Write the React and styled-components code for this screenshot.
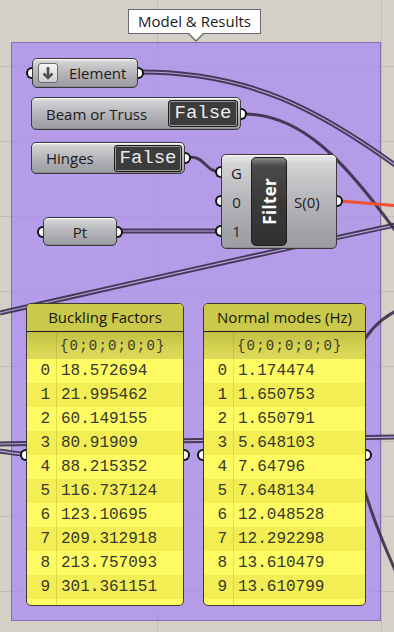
import React from "react";
import styled, { createGlobalStyle } from "styled-components";

const Global = createGlobalStyle`
  html, body { margin: 0; padding: 0; background: #d4d0c8; }
  body { font-family: "Open Sans", "Noto Sans", sans-serif; color: #111; }
`;

const Canvas = styled.div`
  position: relative;
  width: 394px;
  height: 632px;
  overflow: hidden;
  background-color: #d4d0c8;
  background-image:
    linear-gradient(to right, #c0bcb4 1px, transparent 1px),
    linear-gradient(to bottom, #c0bcb4 1px, transparent 1px);
  background-size: 224px 75px;
  background-position: 157px 66px;
`;

const Group = styled.div`
  position: absolute;
  left: 11px;
  top: 42px;
  width: 370px;
  height: 579px;
  box-sizing: border-box;
  background: rgba(168, 136, 245, 0.72);
  border: 1px solid rgba(110, 92, 160, 0.7);
`;

const Tip = styled.div`
  position: absolute;
  left: 128px;
  top: 9px;
  width: 133px;
  height: 25px;
  box-sizing: border-box;
  background: #fff;
  border: 1px solid #6a6a6a;
  font-size: 15px;
  line-height: 22px;
  text-align: center;
  color: #1a1a1a;

  &::before,
  &::after {
    content: "";
    position: absolute;
    left: 59px;
    border: 8px solid transparent;
    border-bottom: 0;
  }
  &::before {
    bottom: -9px;
    border-top-color: #6a6a6a;
  }
  &::after {
    bottom: -7px;
    border-top-color: #fff;
  }
`;

const Wires = styled.svg`
  position: absolute;
  left: 0;
  top: 0;
  pointer-events: none;
`;

const Node = styled.div`
  position: absolute;
  left: ${(p) => p.$x}px;
  top: ${(p) => p.$y}px;
  width: ${(p) => p.$w}px;
  height: ${(p) => p.$h}px;
  box-sizing: border-box;
  border: 1px solid #3a3a3c;
  border-radius: 5px;
  background: linear-gradient(
    to bottom,
    #ececec 0%,
    #d2d2d4 10%,
    #bcbcc0 40%,
    #a6a6ac 75%,
    #9c9ca4 100%
  );
  box-shadow: inset 0 1px 0 #fafafa, inset 0 -1px 0 #8a8a92;
  display: flex;
  align-items: center;
  font-size: 15px;
  color: #1c1c1c;
`;

const Grip = styled.span`
  position: absolute;
  top: ${(p) => p.$y - 6}px;
  ${(p) => (p.$out ? "right: -7px;" : "left: -7px;")}
  width: 6px;
  height: 12px;
  box-sizing: border-box;
  background: #fff;
  border: 2px solid #111;
  ${(p) =>
    p.$out
      ? "border-left: 0; border-radius: 0 6px 6px 0;"
      : "border-right: 0; border-radius: 6px 0 0 6px;"}
  z-index: 2;
`;

const ListButton = styled.span`
  width: 20px;
  height: 20px;
  margin-left: 5px;
  box-sizing: border-box;
  border: 1px solid #6a6a6a;
  border-radius: 3px;
  background: linear-gradient(to bottom, #f6f6f6, #cfcfcf);
  display: flex;
  align-items: center;
  justify-content: center;
`;

const Label = styled.span`
  margin-left: ${(p) => p.$ml || 0}px;
  white-space: nowrap;
`;

const Toggle = styled(Node)`
  justify-content: space-between;
  padding: 0 2px 0 14px;
`;

const FalseBox = styled.span`
  width: ${(p) => p.$w}px;
  height: 27px;
  box-sizing: border-box;
  background: #3c3c3c;
  border: 1px solid #1c1c1c;
  border-radius: 3px;
  box-shadow: inset 0 0 0 1px #9a9a9a;
  font-family: "Liberation Mono", "DejaVu Sans Mono", monospace;
  font-size: 19px;
  line-height: 25px;
  text-align: center;
  color: #ececec;
`;

const CenterNode = styled(Node)`
  justify-content: center;
`;

const FilterNode = styled(Node)`
  align-items: stretch;
`;

const Ports = styled.div`
  width: ${(p) => p.$w}px;
  display: flex;
  flex-direction: column;
  justify-content: ${(p) => (p.$center ? "center" : "space-around")};
  align-items: ${(p) => (p.$center ? "flex-start" : "center")};
  padding: ${(p) => (p.$center ? "0 0 0 7px" : "3px 0")};
  box-sizing: border-box;
  font-size: 15px;
`;

const Core = styled.div`
  width: 36px;
  margin: 2px 0;
  box-sizing: border-box;
  border: 1px solid #1e1e1e;
  border-radius: 5px;
  background: linear-gradient(to bottom, #8a8a8a 0%, #4a4a4a 9%, #3a3a3a 50%, #303030 100%);
  display: flex;
  align-items: center;
  justify-content: center;
`;

const CoreText = styled.span`
  writing-mode: vertical-rl;
  transform: rotate(180deg);
  color: #fff;
  font-weight: 700;
  font-size: 17px;
  letter-spacing: 0.3px;
`;

const Panel = styled.div`
  position: absolute;
  left: ${(p) => p.$x}px;
  top: 303px;
  width: ${(p) => p.$w}px;
  height: 303px;
  box-sizing: border-box;
  border: 1px solid #3a3a30;
  border-radius: 5px;
  background: #fefc62;
  display: flex;
  flex-direction: column;
`;

const PanelBody = styled.div`
  flex: 1;
  border-radius: 4px;
  overflow: hidden;
  display: flex;
  flex-direction: column;
`;

const PanelHead = styled.div`
  height: 27px;
  flex-shrink: 0;
  background: #cbc94c;
  border-bottom: 1px solid #1e1e10;
  font-size: 15px;
  line-height: 27px;
  text-align: center;
  color: #141408;
`;

const Row = styled.div`
  display: grid;
  grid-template-columns: 30px 1fr;
  height: ${(p) => (p.$path ? 27 : 24)}px;
  flex-shrink: 0;
  background: ${(p) =>
    p.$path
      ? "linear-gradient(to bottom, #c2bf44, #d6d452 60%, #dcd958)"
      : p.$odd
      ? "#f3ee54"
      : "#fefc62"};
  font-family: "Liberation Mono", "Courier New", monospace;
  font-size: ${(p) => (p.$path ? 14 : 16)}px;
  letter-spacing: ${(p) => (p.$path ? 1.2 : 0)}px;
  color: #38382c;
  align-items: center;
`;

const Idx = styled.span`
  height: 100%;
  display: flex;
  align-items: center;
  justify-content: flex-end;
  padding-right: 6px;
  border-right: 1px solid rgba(150, 140, 20, 0.28);
`;

const Val = styled.span`
  padding-left: ${(p) => (p.$path ? 3 : 4)}px;
  white-space: nowrap;
`;

const Filler = styled.div`
  flex: 1;
  display: grid;
  grid-template-columns: 30px 1fr;
`;

const FillIdx = styled.span`
  border-right: 1px solid rgba(150, 140, 20, 0.28);
`;

const WIRE = "rgba(52, 44, 66, 0.88)";
const GAP = "#b9a4ea";

function Wire({ d, double, color, width }) {
  if (double) {
    return (
      <g fill="none">
        <path d={d} stroke={WIRE} strokeWidth={5} />
        <path d={d} stroke={GAP} strokeWidth={1.2} />
      </g>
    );
  }
  return <path d={d} fill="none" stroke={color || WIRE} strokeWidth={width || 3} />;
}

function ArrowDown() {
  return (
    <svg width="14" height="16" viewBox="0 0 14 16">
      <path d="M7 2 V13 M2.5 8.5 L7 13 L11.5 8.5" fill="none" stroke="#505050" strokeWidth="2.6" />
    </svg>
  );
}

function DataPanel({ x, w, title, values }) {
  return (
    <Panel $x={x} $w={w}>
      <Grip $y={151} />
      <Grip $y={151} $out />
      <PanelBody>
        <PanelHead>{title}</PanelHead>
        <Row $path>
          <Idx />
          <Val $path>{"{0;0;0;0;0}"}</Val>
        </Row>
        {values.map((v, i) => (
          <Row key={i} $odd={i % 2 === 1}>
            <Idx>{i}</Idx>
            <Val>{v}</Val>
          </Row>
        ))}
        <Filler>
          <FillIdx />
          <span />
        </Filler>
      </PanelBody>
    </Panel>
  );
}

const buckling = [
  "18.572694",
  "21.995462",
  "60.149155",
  "80.91909",
  "88.215352",
  "116.737124",
  "123.10695",
  "209.312918",
  "213.757093",
  "301.361151",
];

const modes = [
  "1.174474",
  "1.650753",
  "1.650791",
  "5.648103",
  "7.64796",
  "7.648134",
  "12.048528",
  "12.292298",
  "13.610479",
  "13.610799",
];

export default function App() {
  return (
    <>
      <Global />
      <Canvas>
        <Group />
        <Wires width="394" height="632" viewBox="0 0 394 632">
          <Wire double d="M0 313 C 120 286, 250 256, 400 224" />
          <Wire double d="M0 444 C 150 441, 250 440, 400 437" />
          <Wire double d="M-2 451 C 10 452, 14 454, 24 454" />
          <Wire d="M402 308 C 330 340, 330 440, 412 606" />
          <Wire double d="M141 72 C 250 72, 320 110, 402 170" />
          <Wire d="M241 114 C 300 112, 345 160, 402 240" />
          <Wire d="M190 157 C 206 157, 205 172, 221 172" />
          <Wire double d="M122 231 L 221 231" />
          <Wire d="M340 201 L 400 206" color="#f0502e" width={3} />
        </Wires>

        <Tip>Model &amp; Results</Tip>

        <Node $x={32} $y={58} $w={106} $h={30}>
          <Grip $y={14} />
          <Grip $y={14} $out />
          <ListButton>
            <ArrowDown />
          </ListButton>
          <Label $ml={11}>Element</Label>
        </Node>

        <Toggle $x={31} $y={97} $w={210} $h={33}>
          <Grip $y={16} $out />
          <Label>Beam or Truss</Label>
          <FalseBox $w={70}>False</FalseBox>
        </Toggle>

        <Toggle $x={31} $y={142} $w={154} $h={32}>
          <Grip $y={15} $out />
          <Label>Hinges</Label>
          <FalseBox $w={68}>False</FalseBox>
        </Toggle>

        <CenterNode $x={43} $y={217} $w={74} $h={29}>
          <Grip $y={14} />
          <Grip $y={14} $out />
          <Label>Pt</Label>
        </CenterNode>

        <FilterNode $x={221} $y={154} $w={116} $h={95}>
          <Grip $y={17} />
          <Grip $y={46} />
          <Grip $y={76} />
          <Grip $y={46} $out />
          <Ports $w={29}>
            <span>G</span>
            <span>0</span>
            <span>1</span>
          </Ports>
          <Core>
            <CoreText>Filter</CoreText>
          </Core>
          <Ports $w={49} $center>
            <span>S(0)</span>
          </Ports>
        </FilterNode>

        <DataPanel x={26} w={158} title="Buckling Factors" values={buckling} />
        <DataPanel x={203} w={163} title="Normal modes (Hz)" values={modes} />
      </Canvas>
    </>
  );
}
